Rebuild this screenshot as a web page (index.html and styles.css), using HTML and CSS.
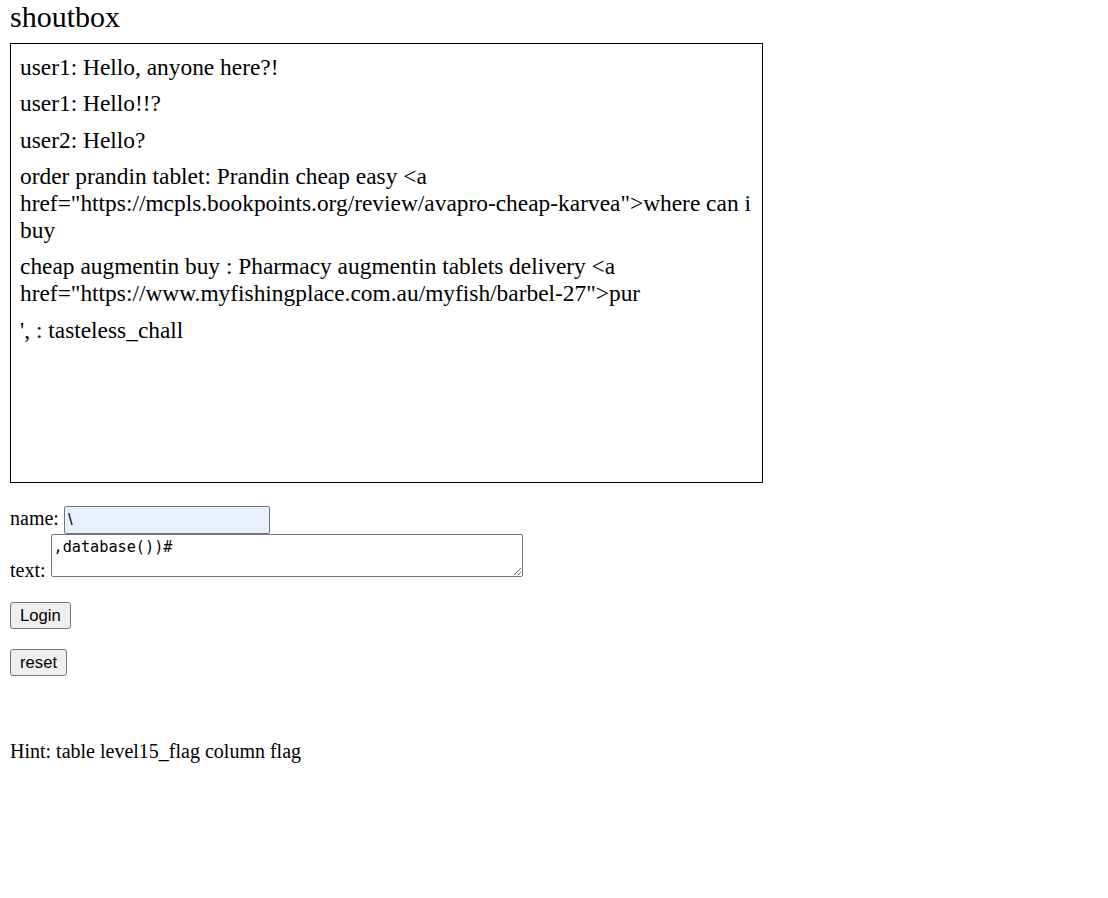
FILE: index.html
```html
<!DOCTYPE html>
<html>
<head>
<meta charset="utf-8">
<title>shoutbox</title>
<link rel="stylesheet" href="styles.css">
</head>
<body>
<h2 class="title">shoutbox</h2>
<div class="shoutbox">
  <p class="msg">user1: Hello, anyone here?!</p>
  <p class="msg">user1: Hello!!?</p>
  <p class="msg">user2: Hello?</p>
  <p class="msg">order prandin tablet: Prandin cheap easy &lt;a href="https://mcpls.bookpoints.org/review/avapro-cheap-karvea"&gt;where can i buy</p>
  <p class="msg">cheap augmentin buy : Pharmacy augmentin tablets delivery &lt;a href="https://www.myfishingplace.com.au/myfish/barbel-27"&gt;pur</p>
  <p class="msg">', : tasteless_chall</p>
</div>
<form class="form">
  <div class="fields">name: <input class="name-input" type="text" value="\"><br>text: <textarea class="text-input">,database())#</textarea></div>
  <button class="btn btn-login" type="button">Login</button>
  <button class="btn btn-reset" type="button">reset</button>
</form>
<p class="hint">Hint: table level15_flag column flag</p>
</body>
</html>
```
FILE: styles.css
```css
body {
  margin: 0 10px;
  font-family: "Liberation Serif", "Times New Roman", serif;
  font-size: 20px;
  color: #000;
  background: #fff;
}

.title {
  font-size: 30px;
  font-weight: normal;
  line-height: 34px;
  margin: 0 0 9px;
}

.shoutbox {
  box-sizing: border-box;
  width: 753px;
  height: 440px;
  border: 1px solid #000;
  padding: 10px 0 0 9px;
  font-size: 23.4px;
  line-height: 27px;
  overflow: hidden;
}

.msg {
  margin: 0 0 9.33px;
}

.form {
  margin: 23px 0 0;
}

.fields {
  line-height: 23px;
}

.name-input {
  box-sizing: border-box;
  width: 206px;
  height: 28px;
  margin: 0;
  padding: 0 3px;
  border: 1px solid #767676;
  border-radius: 2px;
  background: #e8f0fe;
  font-family: "Liberation Sans", Arial, sans-serif;
  font-size: 16.67px;
  color: #000;
  vertical-align: baseline;
}

.text-input {
  box-sizing: border-box;
  width: 472px;
  height: 43px;
  margin: 0;
  padding: 3px 2px 2px;
  border: 1px solid #767676;
  border-radius: 2px;
  font-family: "DejaVu Sans Mono", "Liberation Mono", monospace;
  font-size: 15.2px;
  color: #000;
  background: #fff;
  vertical-align: baseline;
}

.btn {
  display: block;
  box-sizing: border-box;
  height: 27px;
  padding: 0 9px;
  border: 1px solid #767676;
  border-radius: 3px;
  background: #efefef;
  font-family: "Liberation Sans", Arial, sans-serif;
  font-size: 16.67px;
  color: #000;
}

.btn-login {
  margin-top: 20px;
}

.btn-reset {
  margin-top: 20px;
}

.hint {
  margin: 64px 0 0;
  line-height: 23px;
}
```
